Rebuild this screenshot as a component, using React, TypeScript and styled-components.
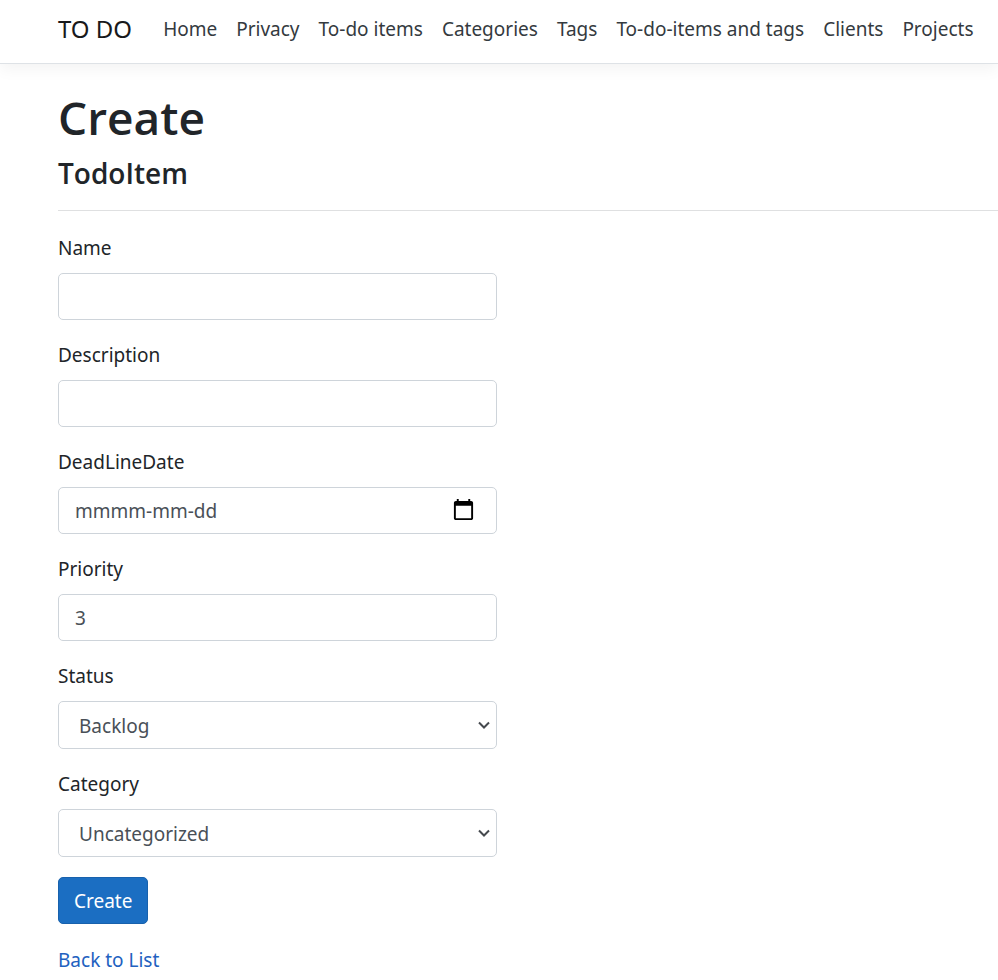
import React from 'react';
import styled, { createGlobalStyle } from 'styled-components';

const GlobalStyle = createGlobalStyle`
  *, *::before, *::after { box-sizing: border-box; }
  body {
    margin: 0;
    background: #fff;
    color: #212529;
    font-family: "Noto Sans", "Open Sans", sans-serif;
    font-size: 19px;
    line-height: 30px;
    overflow-x: hidden;
  }
  input, select, button { font: inherit; }
`;

const Header = styled.header`
  display: flex;
  align-items: center;
  gap: 31px;
  height: 64px;
  padding: 0 16px 6px 58px;
  border-bottom: 1px solid #dee2e6;
  box-shadow: 0 5px 15px rgba(0, 0, 0, 0.05);
`;

const Brand = styled.a`
  color: #18191b;
  font-size: 24px;
  text-decoration: none;
  white-space: nowrap;
`;

const NavList = styled.ul`
  display: flex;
  gap: 19px;
  margin: 0;
  padding: 0;
  list-style: none;
`;

const NavLink = styled.a`
  display: block;
  color: #343a40;
  text-decoration: none;
  white-space: nowrap;
`;

const Main = styled.main`
  padding: 23px 0 0 58px;
`;

const Title = styled.h1`
  margin: 0 0 8px;
  font-family: "Open Sans", "Noto Sans", sans-serif;
  font-size: 46px;
  font-weight: 600;
  line-height: 60px;
`;

const Subtitle = styled.h4`
  margin: 0;
  font-family: "Open Sans", "Noto Sans", sans-serif;
  font-size: 28px;
  font-weight: 600;
  line-height: 36px;
`;

const Divider = styled.hr`
  margin: 19px 0 22px;
  border: 0;
  border-top: 1px solid #dfe0e1;
`;

const Columns = styled.div`
  display: grid;
  grid-template-columns: 7fr 8fr;
`;

const Group = styled.div`
  margin-bottom: 20px;
`;

const Label = styled.label`
  display: block;
  margin-bottom: 10px;
`;

const ControlBox = styled.div`
  position: relative;
`;

const Input = styled.input`
  display: block;
  width: 100%;
  height: 47px;
  padding: 8px 16px;
  border: 1px solid #ced4da;
  border-radius: 5px;
  background: #fff;
  color: #495057;
  &::placeholder { color: #495057; opacity: 1; }
`;

const Select = styled.select`
  display: block;
  width: 100%;
  height: 48px;
  padding: 9px 32px 7px 20px;
  border: 1px solid #ced4da;
  border-radius: 5px;
  background: #fff;
  color: #495057;
  appearance: none;
`;

const PickerButton = styled.button`
  position: absolute;
  top: 11px;
  right: 22px;
  display: flex;
  padding: 0;
  border: 0;
  background: none;
`;

const Chevron = styled.svg`
  position: absolute;
  top: 20px;
  right: 6px;
  pointer-events: none;
`;

const SubmitButton = styled.button`
  display: block;
  height: 47px;
  padding: 0 15px;
  border: 1px solid #1861ac;
  border-radius: 5px;
  background: #1b6ec2;
  color: #fff;
`;

const BackLink = styled.a`
  display: inline-block;
  margin-top: 21px;
  color: #2261c0;
  text-decoration: none;
`;

const links = [
  'Home', 'Privacy', 'To-do items', 'Categories', 'Tags',
  'To-do-items and tags', 'Clients', 'Projects',
];

function Field({ id, label, children }: { id: string; label: string; children: React.ReactNode }) {
  return (
    <Group>
      <Label htmlFor={id}>{label}</Label>
      <ControlBox>{children}</ControlBox>
    </Group>
  );
}

function SelectControl({ id, options }: { id: string; options: string[] }) {
  return (
    <>
      <Select id={id}>
        {options.map((option) => <option key={option}>{option}</option>)}
      </Select>
      <Chevron width="14" height="9" viewBox="0 0 14 9" fill="none" stroke="#45494e" strokeWidth="2" aria-hidden="true">
        <path d="M2 1.5 L7 6.5 L12 1.5" />
      </Chevron>
    </>
  );
}

export default function App() {
  return (
    <>
      <GlobalStyle />
      <Header>
        <Brand href="#">TO DO</Brand>
        <nav>
          <NavList>
            {links.map((link) => (
              <li key={link}><NavLink href="#">{link}</NavLink></li>
            ))}
          </NavList>
        </nav>
      </Header>
      <Main>
        <Title>Create</Title>
        <Subtitle>TodoItem</Subtitle>
        <Divider />
        <Columns>
          <form onSubmit={(event) => event.preventDefault()}>
            <Field id="name" label="Name"><Input id="name" type="text" /></Field>
            <Field id="description" label="Description"><Input id="description" type="text" /></Field>
            <Field id="deadline" label="DeadLineDate">
              <Input id="deadline" type="text" placeholder="mmmm-mm-dd" />
              <PickerButton type="button" aria-label="Open calendar">
                <svg width="23" height="23" viewBox="0 0 24 24" aria-hidden="true">
                  <path
                    fill="#000"
                    d="M20 3h-1V1h-2v2H7V1H5v2H4c-1.100 0-2 .9-2 2v16c0 1.100.9 2 2 2h16c1.100 0 2-.9 2-2V5c0-1.100-.9-2-2-2zm0 18H4V8h16v13z"
                  />
                </svg>
              </PickerButton>
            </Field>
            <Field id="priority" label="Priority"><Input id="priority" type="text" inputMode="numeric" defaultValue="3" /></Field>
            <Field id="status" label="Status"><SelectControl id="status" options={['Backlog']} /></Field>
            <Field id="category" label="Category"><SelectControl id="category" options={['Uncategorized']} /></Field>
            <SubmitButton type="submit">Create</SubmitButton>
          </form>
        </Columns>
        <BackLink href="#">Back to List</BackLink>
      </Main>
    </>
  );
}
